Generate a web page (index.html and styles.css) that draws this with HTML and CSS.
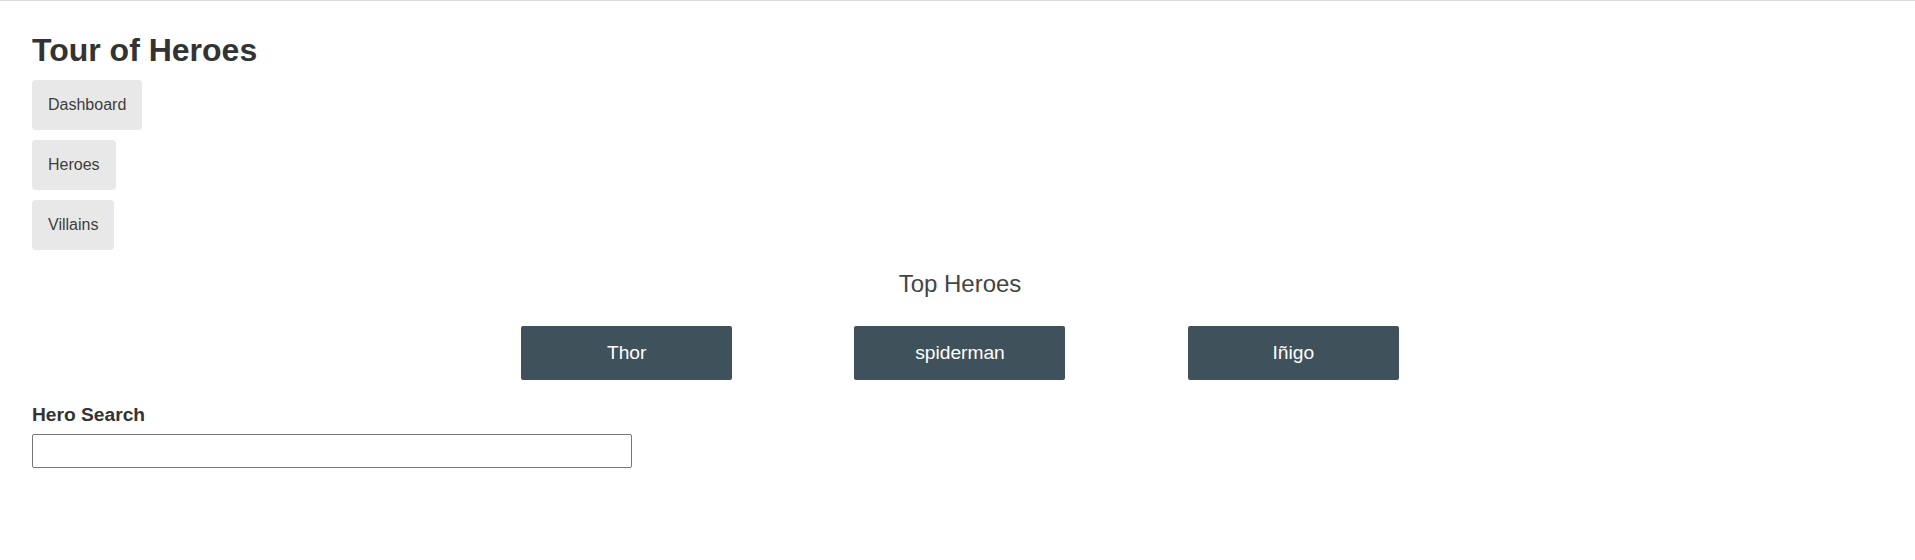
FILE: index.html
```html
<!DOCTYPE html>
<html lang="en">
<head>
<meta charset="utf-8">
<title>Tour of Heroes</title>
<link rel="stylesheet" href="styles.css">
</head>
<body>
<div class="app">
  <h1 class="title">Tour of Heroes</h1>
  <nav class="nav">
    <a class="nav-link" href="#">Dashboard</a>
    <a class="nav-link" href="#">Heroes</a>
    <a class="nav-link" href="#">Villains</a>
  </nav>
  <section class="dashboard">
    <h2 class="dash-title">Top Heroes</h2>
    <div class="heroes-menu">
      <a class="hero-card" href="#">Thor</a>
      <a class="hero-card" href="#">spiderman</a>
      <a class="hero-card" href="#">Iñigo</a>
    </div>
  </section>
  <div class="hero-search">
    <label class="search-label" for="search-box">Hero Search</label>
    <input class="search-input" id="search-box" type="text">
  </div>
</div>
</body>
</html>
```
FILE: styles.css
```css
html {
  border-top: 1px solid #dcdcdf;
  background: #fff;
}
body {
  margin: 0;
  padding: 31px 32px 0 32px;
  font-family: "Liberation Sans", Arial, sans-serif;
  color: #333;
}
.title {
  margin: 0;
  font-size: 32px;
  font-weight: bold;
  color: #333;
  line-height: normal;
}
.nav {
  display: flex;
  flex-direction: column;
  align-items: flex-start;
  gap: 10px;
  padding-top: 11px;
}
.nav-link {
  display: inline-block;
  padding: 16px;
  background-color: #e8e8e8;
  color: #3d3d3d;
  border-radius: 4px;
  text-decoration: none;
  font-size: 16px;
  line-height: normal;
}
.dashboard {
  padding-left: 5px;
}
.dash-title {
  text-align: center;
  font-size: 24px;
  font-weight: normal;
  color: #444;
  margin: 20px 0 20px 0;
  line-height: normal;
}
.heroes-menu {
  max-width: 1000px;
  margin: 0 auto;
  display: flex;
  justify-content: space-around;
  align-items: flex-start;
}
.hero-card {
  display: inline-block;
  box-sizing: border-box;
  width: 211px;
  margin: 8px 0;
  padding: 16px;
  background-color: #3f525c;
  border-radius: 2px;
  color: #fff;
  text-decoration: none;
  text-align: center;
  font-size: 19.2px;
  line-height: normal;
}
.search-label {
  display: block;
  font-weight: bold;
  font-size: 19.2px;
  margin-top: 16px;
  margin-bottom: 8px;
  color: #333;
}
.search-input {
  display: block;
  box-sizing: border-box;
  width: 100%;
  max-width: 600px;
  height: 34px;
  padding: 8px;
  font-family: "Liberation Sans", Arial, sans-serif;
  font-size: 13.33px;
  line-height: 16px;
  border: 1px solid #767676;
  border-radius: 2px;
  color: #333;
}
```
